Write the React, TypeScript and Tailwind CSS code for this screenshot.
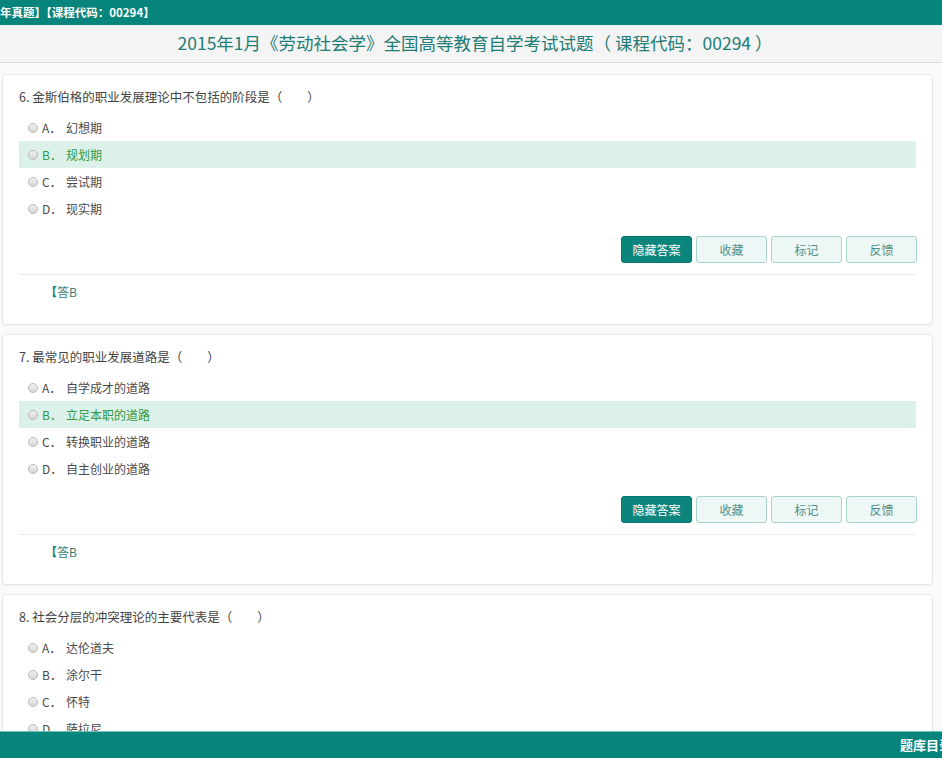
import React from 'react';

type Question = {
  no: number;
  title: string;
  options: string[];
  answer?: string;
  picked?: number;
  showActions?: boolean;
};

const questions: Question[] = [
  {
    no: 6,
    title: '金斯伯格的职业发展理论中不包括的阶段是（　　）',
    options: ['幻想期', '规划期', '尝试期', '现实期'],
    answer: 'B',
    picked: 1,
    showActions: true,
  },
  {
    no: 7,
    title: '最常见的职业发展道路是（　　）',
    options: ['自学成才的道路', '立足本职的道路', '转换职业的道路', '自主创业的道路'],
    answer: 'B',
    picked: 1,
    showActions: true,
  },
  {
    no: 8,
    title: '社会分层的冲突理论的主要代表是（　　）',
    options: ['达伦道夫', '涂尔干', '怀特', '萨拉尼'],
  },
];

const letters = ['A', 'B', 'C', 'D'];
const font = { fontFamily: '"Noto Sans CJK SC", "Noto Sans", sans-serif' };

function Radio() {
  return (
    <span className="inline-block h-[10px] w-[10px] shrink-0 rounded-full border border-[#b9b9b9] bg-gradient-to-b from-[#f2f2f2] to-[#d6d6d6]" />
  );
}

function QuestionCard({ q }: { q: Question }) {
  return (
    <div className="rounded-[4px] border border-[#e6e6e6] bg-white px-4 pt-[12px] pb-[22px] shadow-[0_1px_2px_rgba(0,0,0,0.04)]">
      <div className="h-5 leading-5 text-[12.5px] text-[#444]">
        {q.no}. {q.title}
      </div>
      <div className="mt-[7px]">
        {q.options.map((opt, i) => {
          const on = q.picked === i;
          return (
            <div
              key={i}
              className={
                'flex h-[27px] items-center pl-[9px] text-[12px] ' +
                (on ? 'bg-[#dcf1ea] text-[#2f9a45]' : 'text-[#4a4a4a]')
              }
            >
              <Radio />
              <span className="ml-[4px] w-[24px]">{letters[i]}．</span>
              <span>{opt}</span>
            </div>
          );
        })}
      </div>
      {q.showActions && (
        <>
          <div className="mt-[14px] -mr-[1px] flex justify-end gap-[4px]">
            <button className="h-[27px] w-[71px] rounded-[3px] border border-[#06766e] bg-[#0b857c] text-[12px] text-white">
              隐藏答案
            </button>
            {['收藏', '标记', '反馈'].map((t) => (
              <button
                key={t}
                className="h-[27px] w-[71px] rounded-[3px] border border-[#a9d3cd] bg-[#edf7f5] text-[12px] text-[#4f8f88]"
              >
                {t}
              </button>
            ))}
          </div>
          <div className="mt-[11px] border-t border-[#ececec] pt-[7px] pl-[26px] h-[28px] leading-5 text-[12px] text-[#3d7d76]">
            <span className="font-bold text-[#0b857c]">【</span>答{q.answer}
          </div>
        </>
      )}
    </div>
  );
}

export default function App() {
  return (
    <div className="min-h-screen bg-[#fafafa]" style={font}>
      <div className="h-[25px] bg-[#07857c] text-[11.5px] font-bold leading-[25px] text-white whitespace-nowrap">
        年真题】【课程代码：00294】
      </div>
      <div className="flex h-[38px] items-center justify-center border-b border-[#dedede] bg-[#f4f4f4] pl-[8px] text-[17.5px] text-[#1f7d75]">
        2015年1月《劳动社会学》全国高等教育自学考试试题（ 课程代码：00294 ）
      </div>
      <div className="flex w-[933px] flex-col gap-[9px] pt-[11px] pl-[2px] pb-[60px]">
        {questions.map((q) => (
          <QuestionCard key={q.no} q={q} />
        ))}
      </div>
      <div className="fixed bottom-0 left-0 right-0 flex h-[27px] items-center justify-end overflow-hidden border-t border-[#6cc4bd] bg-[#07857c]">
        <span className="mr-[-10px] whitespace-nowrap text-[13px] font-bold text-white">题库目录</span>
      </div>
    </div>
  );
}
